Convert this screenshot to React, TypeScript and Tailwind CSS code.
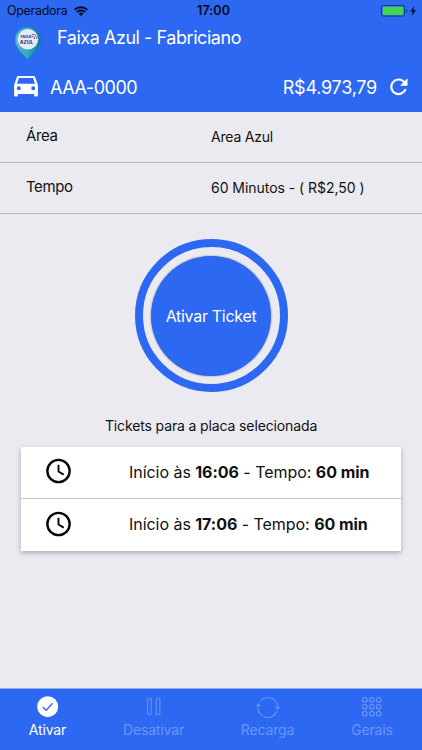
import type { ReactNode } from 'react'

interface Ticket {
  start: string
  minutes: number
}

interface Tab {
  label: string
  active?: boolean
  width: string
  icon: ReactNode
}

const TICKETS: Ticket[] = [
  { start: '16:06', minutes: 60 },
  { start: '17:06', minutes: 60 },
]

const TABS: Tab[] = [
  { label: 'Ativar', active: true, width: 'w-[95px]', icon: <CheckIcon /> },
  { label: 'Desativar', width: 'w-[117px]', icon: <PauseIcon /> },
  { label: 'Recarga', width: 'w-[111px]', icon: <SyncIcon /> },
  { label: 'Gerais', width: 'w-[98px]', icon: <GridIcon /> },
]

function WifiIcon() {
  return (
    <svg width="14" height="10" viewBox="0 0 14 10" fill="none" stroke="currentColor" strokeWidth="2">
      <path d="M.7 3.7a9 9 0 0 1 12.6 0M2.9 6.1a5.8 5.8 0 0 1 8.2 0" />
      <path d="M7 9.9 4.7 7.7a3.2 3.2 0 0 1 4.6 0Z" fill="currentColor" stroke="none" />
    </svg>
  )
}

function BatteryIcon() {
  return (
    <svg width="37" height="12" viewBox="0 0 37 12">
      <rect x=".5" y=".5" width="23" height="10.6" rx="2" fill="none" stroke="#123a8f" />
      <rect x="1.7" y="1.7" width="20.6" height="8.2" rx=".8" fill="#44d653" />
      <path d="M25 4v4q1.3-.7 1.3-2T25 4Z" fill="#123a8f" />
      <path d="M33.4.8 29.3 6.4h2.5L30.6 11l4.5-5.8h-2.6Z" fill="#050b20" />
    </svg>
  )
}

function PinLogo() {
  return (
    <svg width="28" height="36" viewBox="0 0 28 36">
      <defs>
        <linearGradient id="pin" x1="0" x2="1">
          <stop offset="0" stopColor="#55bfd2" />
          <stop offset=".5" stopColor="#2ba9c2" />
          <stop offset="1" stopColor="#087b99" />
        </linearGradient>
      </defs>
      <path d="M13.5 34.3C11.5 29.5.9 23.5.9 13.8a13 13 0 0 1 26 0C26.9 23.5 15.5 29.5 13.5 34.3Z" fill="url(#pin)" stroke="#236cab" strokeWidth=".5" />
      <circle cx="13.9" cy="13.3" r="10.3" fill="#e5eaf2" />
      <g fill="#49368c" fontFamily="Inter, sans-serif" fontWeight="800">
        <text x="6.8" y="11.8" fontSize="3.6" textLength="10.5" lengthAdjust="spacingAndGlyphs">FAIXA</text>
        <text x="5.8" y="17.6" fontSize="4.2" textLength="13.5" lengthAdjust="spacingAndGlyphs">AZUL</text>
      </g>
      <path d="M17.7 8.3c3.2-.4 5.3 2 5.2 4.7M17.7 10.5c1.9-.2 3 1 2.9 2.5" fill="none" stroke="#675a9d" strokeWidth="1" />
    </svg>
  )
}

function CarIcon() {
  return (
    <svg width="24" height="22" viewBox="0 0 24 22">
      <path
        fill="#fff"
        fillRule="evenodd"
        d="M21.3 1.4C21 .6 20.3.1 19.4.1H4.6C3.7.1 3 .6 2.7 1.4L.1 9v10.3c0 .8.5 1.3 1.3 1.3h1.2c.8 0 1.3-.5 1.3-1.3V18h16.2v1.3c0 .8.5 1.3 1.3 1.3h1.2c.8 0 1.3-.5 1.3-1.3V9ZM4.9 2h14.2l1.9 5.8H3ZM4.8 14.2a2 2 0 1 1 0-4 2 2 0 0 1 0 4Zm14.4 0a2 2 0 1 1 0-4 2 2 0 0 1 0 4Z"
      />
    </svg>
  )
}

function RefreshIcon() {
  return (
    <svg width="18" height="18" viewBox="0 0 18 18">
      <path d="M14.3 4.2A7.3 7.3 0 1 0 15.6 11" fill="none" stroke="#fff" strokeWidth="2.2" />
      <path d="M17.5.3v7.4h-7.4Z" fill="#fff" />
    </svg>
  )
}

function ClockIcon() {
  return (
    <svg width="25" height="26" viewBox="0 0 26 26" fill="none" stroke="#080808" strokeWidth="2.5">
      <circle cx="13" cy="13" r="11.6" />
      <path d="M13 6.4v7.1l5.4 3.3" strokeWidth="2" />
    </svg>
  )
}

function CheckIcon() {
  return (
    <svg width="22" height="22" viewBox="0 0 22 22">
      <circle cx="10.7" cy="10.7" r="10.5" fill="#fff" />
      <path d="m5.8 11 3.4 3.3 6.4-7" fill="none" stroke="#2c68f2" strokeWidth="1.3" />
    </svg>
  )
}

function PauseIcon() {
  return (
    <svg width="22" height="22" viewBox="0 0 22 22" fill="none" stroke="currentColor" strokeWidth="1">
      <path d="M4.6 2.6h3.6v15.8H4.6ZM13.3 2.6h3.6v15.8h-3.6Z" />
    </svg>
  )
}

function SyncIcon() {
  return (
    <svg width="24" height="22" viewBox="0 0 24 22" fill="none" stroke="currentColor" strokeWidth="1.1">
      <path d="M4.2 5.4A9.8 9.8 0 0 1 21.7 12.3M21 14.8A9.8 9.8 0 0 1 2.4 8.6" />
      <path d="m.4 10.2 2-2 2.3 1.9M19.2 11l2.4 2 2-2.2" />
    </svg>
  )
}

function GridIcon() {
  const steps = [3.8, 10.8, 17.7]
  return (
    <svg width="22" height="22" viewBox="0 0 22 22" fill="none" stroke="currentColor" strokeWidth="1.1">
      {steps.map(y => steps.map(x => <circle key={`${x}-${y}`} cx={x} cy={y} r="2.3" />))}
    </svg>
  )
}

function Header() {
  return (
    <header className="h-28 shrink-0 bg-[#2c68f2] text-white">
      {/* Status bar */}
      <div className="grid h-[22px] grid-cols-[190px_1fr_41px] items-center text-[12.5px] text-[#050b20]">
        <div className="flex items-center gap-[7px] pl-[7px]">
          <span className="tracking-[-0.3px]">Operadora</span>
          <WifiIcon />
        </div>
        <span className="pl-[7px] font-semibold tracking-[0.1px]">17:00</span>
        <BatteryIcon />
      </div>

      <div className="flex h-[41px] pl-[14px]">
        <div className="pt-1"><PinLogo /></div>
        <h1 className="pl-[15px] pt-1 text-[18px] leading-6 tracking-[-0.45px] whitespace-nowrap">Faixa Azul - Fabriciano</h1>
      </div>

      <div className="flex h-12 items-center pl-[14px] pr-[14px]">
        <CarIcon />
        <span className="pl-3 pt-[2px] text-[18px] leading-6 tracking-[-0.45px]">AAA-0000</span>
        <span className="ml-auto pr-[13px] pt-[2px] text-[18px] leading-6 tracking-[-0.25px]">R$4.973,79</span>
        <RefreshIcon />
      </div>
    </header>
  )
}

function TicketRow({ ticket }: { ticket: Ticket }) {
  return (
    <li className="flex h-[52px] items-center pl-[25px] pb-[3px]">
      <ClockIcon />
      <p className="pl-[58px] pt-px text-[16px] leading-5 tracking-[-0.04px] whitespace-nowrap">
        Início às <b>{ticket.start}</b> - Tempo: <b>{ticket.minutes} min</b>
      </p>
    </li>
  )
}

export default function App() {
  return (
    <div className="flex h-[750px] w-[422px] flex-col overflow-hidden bg-[#ebeaf0] font-['Inter','Liberation_Sans',sans-serif] text-[#111]">
      <Header />

      <main className="flex-1">
        <dl>
          <div className="flex h-[51px] border-b border-[#b9b9bf] pl-[26px]">
            <dt className="w-[185px] pt-[14px] text-[15px] leading-5 tracking-[-0.4px]">Área</dt>
            <dd className="pt-[15px] text-[14px] leading-5 tracking-[-0.2px]">Area Azul</dd>
          </div>
          <div className="flex h-[51px] border-b border-[#b9b9bf] pl-[26px]">
            <dt className="w-[185px] pt-[14px] text-[15px] leading-5 tracking-[-0.4px]">Tempo</dt>
            <dd className="pt-[15px] text-[14px] leading-5 tracking-[-0.04px]">60 Minutos - ( R$2,50 )</dd>
          </div>
        </dl>

        <div className="flex justify-center pt-[25px]">
          <button className="flex size-[153px] items-center justify-center rounded-full border-[8.5px] border-[#2c68f2]">
            <span className="flex size-[120px] items-center justify-center rounded-full bg-[#2c68f2] text-[16px] tracking-[-0.3px] text-white shadow-[0_0_2px_rgba(0,0,0,0.5)]">
              Ativar Ticket
            </span>
          </button>
        </div>

        <h2 className="pt-6 text-center text-[14px] leading-5 tracking-[-0.13px]">Tickets para a placa selecionada</h2>

        <ul className="mx-[21px] mt-[11px] divide-y divide-[#c2c2c4] bg-white shadow-[0_2px_5px_rgba(0,0,0,0.28)]">
          {TICKETS.map(t => <TicketRow key={t.start} ticket={t} />)}
        </ul>
      </main>

      {/* Bottom tabs */}
      <nav className="flex h-[62px] shrink-0 border-t border-[#8eacf5] bg-[#2c68f2]">
        {TABS.map(tab => (
          <button key={tab.label}
            className={`flex flex-col items-center pt-[7px] ${tab.width} ${tab.active ? 'text-white' : 'text-[#6b96f6]'}`}>
            {tab.icon}
            <span className="mt-[2px] text-[14px] leading-5 tracking-[-0.15px]">{tab.label}</span>
          </button>
        ))}
      </nav>
    </div>
  )
}
